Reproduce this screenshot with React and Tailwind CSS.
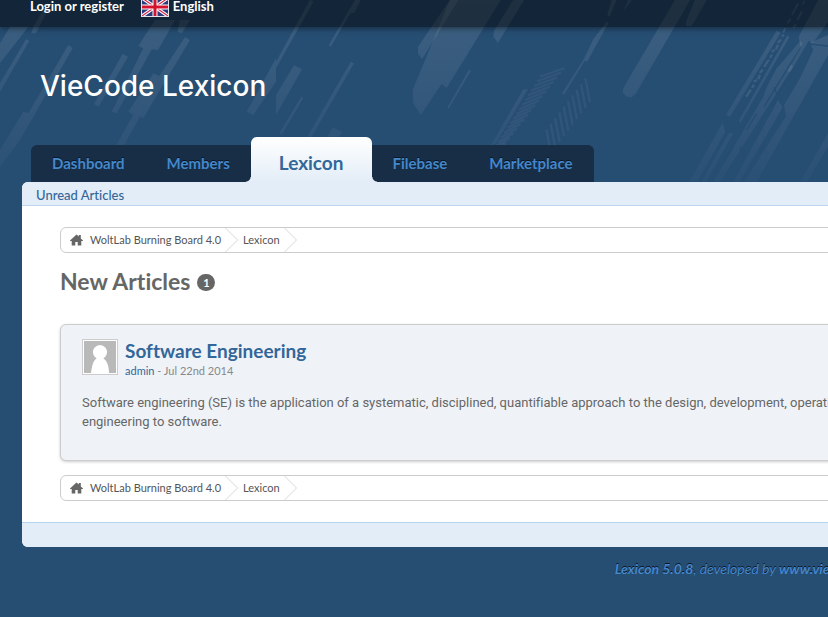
import React from 'react';

const tabs = [
  { label: 'Dashboard' },
  { label: 'Members' },
  { label: 'Lexicon', active: true },
  { label: 'Filebase' },
  { label: 'Marketplace' },
];

const stripes = [
  '30,80 85,80 0,190 0,130',
  '78,118 88,122 0,275 0,250',
  '100,80 130,30 140,36 108,100 94,100',
  '205,135 218,145 60,420 0,500 0,450 70,335 85,340',
  '368,162 384,170 296,320 282,312',
  '465,60 525,60 474,150 455,148 350,340 335,335 430,145 415,138',
  '555,112 570,120 485,262 430,355 420,350 310,546 285,546 400,345 385,335 460,220 478,228',
  '540,60 570,60 545,100 533,95',
  '828,175 828,245 760,345 740,335',
  '930,0 940,5 828,205 828,185',
  '1065,0 1082,0 1062,40 1052,38 992,140 986,136',
  '882,196 906,208 828,345 828,285',
  '904,290 910,294 845,405 838,400',
  '1052,186 1062,190 935,410 922,410',
  '998,382 1026,396 1018,410 982,410',
  '1350,0 1375,0 1266,178 1254,160 1254,140',
  '1350,0 1502,0 1340,264 1325,252 1262,345 1240,310 1238,270',
  '1540,0 1572,0 1494,128 1480,110 1482,92',
  '1408,208 1412,214 1346,326 1342,322',
  '1570,268 1584,268 1488,430 1470,440',
  '1835,0 1850,0 1828,50 1822,44',
  '1885,0 1895,0 1870,32',
  '1820,65 1826,68 1798,118 1762,185 1754,182 1692,285 1686,280 1750,180 1780,118',
  '2025,0 2070,0 1908,280 1896,292 1880,290 1868,278 1870,264',
  '2085,0 2120,0 2075,78 2058,78 2058,65',
  '2330,92 2342,98 2190,350 2178,344',
  '2362,106 2368,112 2222,368 2216,362',
  '2168,368 2176,395 2092,546 2068,546',
  '2186,400 2200,400 2118,546 2104,546',
  '2400,124 2408,130 2370,190 2380,200 2160,546 2140,546 2290,290 2300,262 2330,205 2352,180',
  '2455,0 2484,0 2484,66 2438,130 2426,122 2370,218 2362,212 2402,145 2396,110',
  '2484,105 2484,165 2270,546 2232,546 2325,400 2358,350 2352,315 2400,235 2440,150 2430,128',
  '2334,300 2348,322 2218,546 2200,546',
  '2484,400 2484,440 2420,546 2400,546',
];

const HeaderArt = () => {
  const hatch = [];
  for (let i = 0; i < 18; i++) {
    hatch.push(`M${1620 - i * 9} ${230 + i * 14} l${74 - i * 2} -26`);
  }
  const bars = [];
  for (let i = 0; i < 10; i++) {
    bars.push(`M${1756 - i * 13} ${235 + i * 17} l14 72`);
  }
  const chips = [];
  for (let i = 0; i < 13; i++) {
    chips.push(`M${2352 - i * 9} ${104 + i * 15} l-${6 + (i % 2) * 4} ${6 + (i % 3) * 4}`);
  }
  return (
    <svg
      className="pointer-events-none absolute top-0 left-0 h-[182px] w-[828px]"
      viewBox="0 0 2484 546"
      aria-hidden="true"
    >
      <defs>
        <linearGradient id="fade" gradientUnits="userSpaceOnUse" x1="0" y1="0" x2="0" y2="546">
          <stop offset="0" stopColor="#fff" stopOpacity="0.11" />
          <stop offset="0.35" stopColor="#fff" stopOpacity="0.08" />
          <stop offset="1" stopColor="#fff" stopOpacity="0.02" />
        </linearGradient>
      </defs>
      {stripes.map((points) => (
        <polygon key={points} points={points} fill="url(#fade)" />
      ))}
      <path d={hatch.join(' ')} stroke="#fff" strokeOpacity="0.05" strokeWidth="7" />
      <path d={bars.join(' ')} stroke="#fff" strokeOpacity="0.05" strokeWidth="7" />
      <path d={chips.join(' ')} stroke="#fff" strokeOpacity="0.1" strokeWidth="7" />
      <path
        d="M2376 45 l18 -35 M2362 70 l10 -14 M2392 60 l14 -26 M2380 84 l8 -12 M2356 84 l-6 14 M2408 12 l6 -10"
        stroke="#fff"
        strokeOpacity="0.1"
        strokeWidth="6"
      />
      <path
        d="M2386 195 l-70 122 M2372 190 l-80 130 M2322 262 l20 46 M2220 440 l14 32 M2270 340 l-30 50 M2200 440 l-22 36 M2430 132 l54 6 M2290 436 l-14 26"
        fill="none"
        stroke="#264d72"
        strokeWidth="4"
      />
    </svg>
  );
};

const Flag = () => (
  <svg className="h-5 w-7" viewBox="0 0 28 20" aria-hidden="true">
    <rect width="28" height="20" fill="#e4e4e8" />
    <svg x="1" y="1" width="26" height="18" viewBox="0 0 26 18">
      <rect width="26" height="18" fill="#2b3a7c" />
      <path d="M0 0L26 18M26 0L0 18" stroke="#fff" strokeWidth="3.4" />
      <path d="M0 0L26 18M26 0L0 18" stroke="#d8284a" strokeWidth="1.2" />
      <path d="M13 0V18M0 9H26" stroke="#fff" strokeWidth="5" />
      <path d="M13 0V18M0 9H26" stroke="#d4122e" strokeWidth="3" />
    </svg>
  </svg>
);

const HomeIcon = () => (
  <svg className="mr-[7px] h-3 w-[13px]" viewBox="0 0 13 12" fill="#666" aria-hidden="true">
    <path d="M6.500 0.500L8.800 2.600V1H10.800V4.400L13 6.500V7H11.300V11.500H7.700V8H5.300V11.500H1.700V7H0V6.500Z" />
  </svg>
);

const Chevron = () => (
  <svg className="h-6 w-[13px]" viewBox="0 0 13 24" fill="none" aria-hidden="true">
    <path d="M0.5 0L12.5 12L0.5 24" stroke="#d9d9d9" />
  </svg>
);

const Breadcrumb = () => (
  <nav
    aria-label="Breadcrumb"
    className="flex items-center rounded-md border border-[#ccc] bg-white text-[11px] leading-6 text-[#555]"
  >
    <a href="#" className="flex items-center pr-1 pl-[9px]">
      <HomeIcon />
      WoltLab Burning Board 4.0
    </a>
    <Chevron />
    <a href="#" className="pr-1 pl-[5px]">Lexicon</a>
    <Chevron />
  </nav>
);

const Avatar = () => (
  <svg className="h-9 w-9 border border-[#ccc] bg-white p-px" viewBox="0 0 32 32" aria-hidden="true">
    <rect width="32" height="32" fill="#b9b9b9" />
    <path
      d="M7 32C8 25 9 20 12.500 17.500A7 7.300 0 1 1 19.500 17.500C23 20 25 25 25 32Z"
      fill="#fff"
    />
  </svg>
);

const App = () => (
  <div className="min-h-screen overflow-hidden bg-[#264d72] font-['Lato','Open_Sans',sans-serif] text-[13px] text-[#666] [font-variant-ligatures:none]">
    <div className="relative min-w-[1500px] pb-9">
      <HeaderArt />

      {/* User panel */}
      <div className="relative flex h-[27px] items-center bg-black/50 pb-[14px] pl-[30px] leading-[13px] font-bold text-white shadow-[0_1px_6px_rgba(0,0,0,0.5)]">
        <a href="#">Login or register</a>
        <button type="button" className="ml-[17px] flex items-center gap-1">
          <Flag />
          English
        </button>
      </div>

      <header className="relative">
        <a href="#" className="block pt-10 pl-10 font-['Inter',sans-serif] text-[28px] leading-[38px] font-medium text-white">
          VieCode Lexicon
        </a>

        <nav className="mt-8 ml-[31px]">
          <ul className="flex items-end text-[15px] font-bold">
            {tabs.map((tab) =>
              tab.active ? (
                <li
                  key={tab.label}
                  className="relative before:absolute before:bottom-0 before:-left-[5px] before:h-[5px] before:w-[5px] before:bg-[radial-gradient(circle_at_0_0,transparent_4px,#e3edf7_5px)] after:absolute after:-right-[5px] after:bottom-0 after:h-[5px] after:w-[5px] after:bg-[radial-gradient(circle_at_100%_0,transparent_4px,#e3edf7_5px)]"
                >
                  <a
                    href="#"
                    className="block h-[45px] rounded-t-md bg-linear-to-b from-white to-[#e3edf7] px-7 pt-3 text-[19px] leading-7 text-[#336699]"
                  >
                    {tab.label}
                  </a>
                </li>
              ) : (
                <li key={tab.label} className="bg-[#172c45]/95 first:rounded-tl-md last:rounded-tr-md">
                  <a
                    href="#"
                    className="block px-[21px] leading-[37px] text-[#4488cc] [text-shadow:0_-1px_0_#0a1626]"
                  >
                    {tab.label}
                  </a>
                </li>
              ),
            )}
          </ul>
        </nav>
      </header>

      <main className="relative mr-[22px] ml-[22px] overflow-hidden rounded-md bg-white">
        <div className="border-b border-[#bdd5ee] bg-[#e3edf7] pt-[3px] pl-[14px] leading-5">
          <a href="#" className="font-medium text-[#336699]">Unread Articles</a>
        </div>

        <div className="px-[38px] pt-[21px] pb-[21px]">
          <Breadcrumb />

          <h1 className="mt-3 flex items-center gap-[7px] text-[23px] leading-8 font-bold">
            New Articles
            <span className="mt-[3px] flex h-[17px] w-[18px] items-center justify-center rounded-full bg-[#666] text-[11px] text-white">
              1
            </span>
          </h1>

          <article className="mt-[27px] rounded-md border border-[#ccc] bg-[#eff3f8] px-[21px] pt-[14px] pb-[29px] shadow-[0_1px_3px_rgba(0,0,0,0.2)]">
            <div className="flex gap-[7px]">
              <Avatar />
              <div>
                <h2 className="text-[19px] leading-6 font-bold text-[#336699]">
                  <a href="#">Software Engineering</a>
                </h2>
                <p className="text-[11px] leading-4 text-[#888]">
                  <a href="#" className="text-[#336699]">admin</a> - Jul 22nd 2014
                </p>
              </div>
            </div>
            <p className="mt-[14px] font-['Roboto',sans-serif] leading-[19px]">
              Software engineering (SE) is the application of a systematic, disciplined, quantifiable approach to the
              design, development, operation, and maintenance of software, and the study of these approaches; that is,
              the application of engineering to software.
            </p>
          </article>

          <div className="mt-[14px]">
            <Breadcrumb />
          </div>
        </div>

        <div className="h-[25px] border-t border-[#b4d3ee] bg-[#e3edf7]" />
      </main>

      <footer className="mt-3 text-center text-sm leading-[19px] text-[#4488cc] italic [text-shadow:0_-1px_0_#0a1626]">
        <a href="#">
          <b>Lexicon 5.0.8</b>, developed by <b>www.viecode.com</b>
        </a>
      </footer>
    </div>
  </div>
);

export default App;
